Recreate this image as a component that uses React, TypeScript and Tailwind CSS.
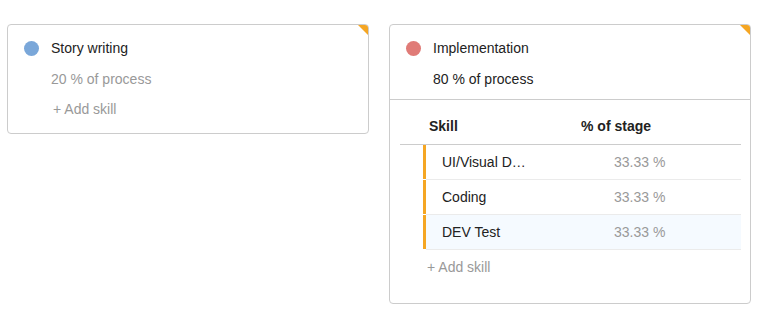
import React from 'react';

type Skill = { name: string; pct: string; active?: boolean };

const Corner: React.FC = () => (
  <svg className="absolute top-0 right-0" width="10" height="10" viewBox="0 0 10 10">
    <polygon points="0,0 10,0 10,10" fill="#f5a623" />
  </svg>
);

const StageHead: React.FC<{ color: string; title: string; pct: string; dark?: boolean }> = ({ color, title, pct, dark }) => (
  <div className="flex pl-[16px] pt-[15px]">
    <span className="mt-[1px] h-[15px] w-[15px] rounded-full shrink-0" style={{ backgroundColor: color }} />
    <div className="ml-[12px]">
      <div className="h-[17px] leading-[17px] text-[#222]">{title}</div>
      <div className={`mt-[14px] h-[17px] leading-[17px] ${dark ? 'text-[#222]' : 'text-[#999]'}`}>{pct}</div>
    </div>
  </div>
);

const skills: Skill[] = [
  { name: 'UI/Visual D…', pct: '33.33 %' },
  { name: 'Coding', pct: '33.33 %' },
  { name: 'DEV Test', pct: '33.33 %', active: true },
];

const App: React.FC = () => {
  return (
    <div className="w-[765px] h-[316px] bg-white text-[14px] flex items-start gap-[20px] pl-[7px] pt-[24px]" style={{ fontFamily: '"Liberation Sans", Arial, sans-serif' }}>
      <div className="relative w-[362px] h-[110px] border border-[#cccccc] rounded-[4px] overflow-hidden">
        <Corner />
        <StageHead color="#7aa7d9" title="Story writing" pct="20 % of process" />
        <div className="ml-[45px] mt-[13px] h-[17px] leading-[17px] text-[#999]">+ Add skill</div>
      </div>

      <div className="relative w-[362px] h-[280px] border border-[#cccccc] rounded-[4px] overflow-hidden">
        <Corner />
        <StageHead color="#e07b77" title="Implementation" pct="80 % of process" dark />
        <div className="mt-[11px] border-t border-[#cccccc]" />
        <div className="ml-[10px] mr-[9px]">
          <div className="flex h-[45px] items-end pb-[9px] leading-[17px] border-b border-[#cccccc] font-bold text-[#222]">
            <div className="w-[181px] pl-[29px]">Skill</div>
            <div>% of stage</div>
          </div>
          {skills.map((s) => (
            <div key={s.name} className="flex h-[35px] ml-[23px]">
              <div className="w-[3px] h-[34px] bg-[#f5a623] shrink-0" />
              <div className={`flex flex-1 items-center border-b border-[#ebebeb] ${s.active ? 'bg-[#f5faff]' : ''}`}>
                <div className="w-[188px] pl-[16px] text-[#222]">{s.name}</div>
                <div className="text-[#999]">{s.pct}</div>
              </div>
            </div>
          ))}
          <div className="h-[34px] flex items-center pl-[27px] text-[#999]">+ Add skill</div>
        </div>
      </div>
    </div>
  );
};

export default App;
